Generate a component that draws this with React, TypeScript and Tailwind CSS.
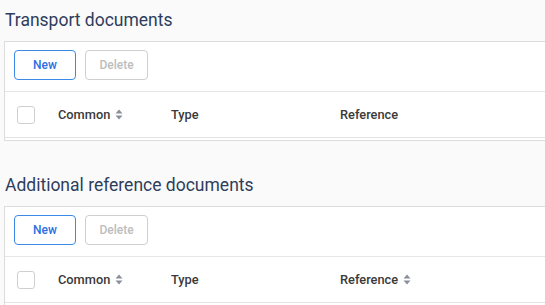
function SortIcon() {
  return (
    <svg width="8" height="11" viewBox="0 0 8 11" className="ml-[5px] text-[#8a8f99]">
      <path d="M4 0.5 L7.5 4.5 H0.5 Z" fill="currentColor" />
      <path d="M4 10.5 L7.5 6.5 H0.5 Z" fill="currentColor" />
    </svg>
  );
}

function DocSection({ title, sortReference }: { title: string; sortReference?: boolean }) {
  return (
    <section>
      <h2 className="pl-[5px] text-[17.5px] leading-[24px] text-[#2e3d5c] font-normal">{title}</h2>
      <div className="mt-[9px] ml-[4px] w-[580px] bg-white border border-[#dcdcdc] pb-[2px]">
        {/* Toolbar */}
        <div className="flex gap-[9px] pl-[9px] pt-[8px] pb-[11px] border-b border-[#e6e6e9]">
          <button className="w-[62px] h-[30px] rounded-[4px] border border-[#3d8ae6] text-[12px] font-medium text-[#2c6fe0]">
            New
          </button>
          <button className="w-[63px] h-[30px] rounded-[4px] border border-[#cfcfcf] text-[12px] font-medium text-[#bdbdbd]" disabled>
            Delete
          </button>
        </div>
        {/* Header row */}
        <div className="flex items-center h-[46px] border-b border-[#e3e3e6] text-[12.8px] font-medium text-[#3a3a3a]">
          <div className="ml-[12px] w-[18px] h-[18px] rounded-[3px] border border-[#cfcfcf] bg-white" />
          <div className="ml-[23px] w-[113px] flex items-center">
            Common
            <SortIcon />
          </div>
          <div className="w-[169px]">Type</div>
          <div className="flex items-center">
            Reference
            {sortReference && <SortIcon />}
          </div>
        </div>
      </div>
    </section>
  );
}

export default function App() {
  return (
    <div className="w-[545px] h-[305px] overflow-hidden bg-[#fafafa] pt-[8px] font-['Roboto',sans-serif]">
      <DocSection title="Transport documents" />
      <div className="h-[32px]" />
      <DocSection title="Additional reference documents" sortReference />
    </div>
  );
}
